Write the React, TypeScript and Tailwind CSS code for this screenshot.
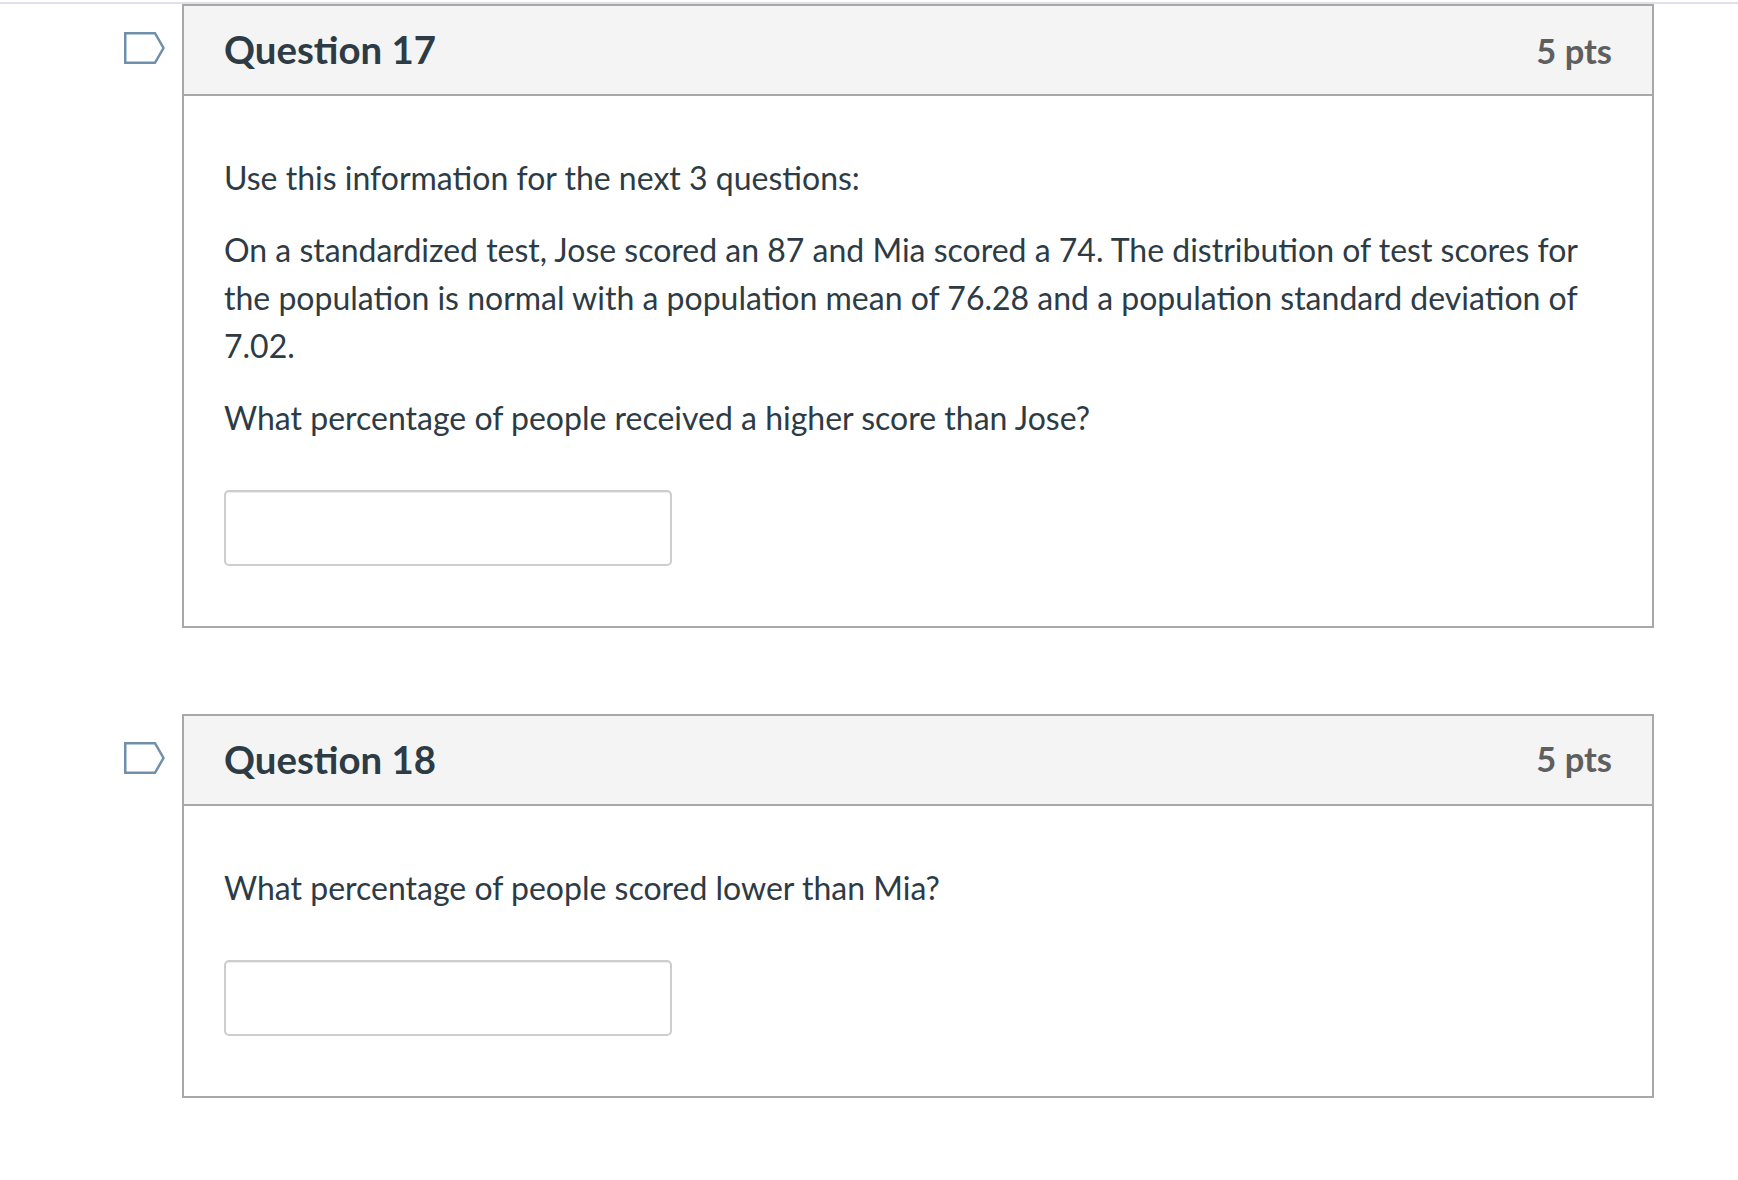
import React from 'react';

const Flag = () => (
  <svg width="41" height="32" viewBox="0 0 41 32" className="block">
    <path d="M1.25 1.25H31L39.5 16L31 30.75H1.25Z" fill="none" stroke="#6f8fab" strokeWidth="2.5" strokeLinejoin="miter" />
  </svg>
);

interface QuestionProps {
  title: string;
  ptsClass: string;
  children: React.ReactNode;
}

const Question: React.FC<QuestionProps> = ({ title, ptsClass, children }) => (
  <div className="flex items-start">
    <div className="w-[182px] shrink-0 pl-[124px] pt-[28px]">
      <Flag />
    </div>
    <div className="w-[1472px] border-2 border-[#a8a8a8] bg-white">
      <div className="flex h-[90px] items-center justify-between border-b-2 border-[#a8a8a8] bg-[#f4f4f4] px-[40px]">
        <h2 className="pb-[2px] text-[38.4px] font-bold text-[#2d3b45]">{title}</h2>
        <span className={ptsClass}>5 pts</span>
      </div>
      <div className="px-[40px] pt-[58px] pb-[60px]">
        {children}
        <div className="h-[76px] w-[448px] rounded-[5px] border-2 border-[#cdcdcd] bg-white shadow-[inset_0_1px_1px_rgba(0,0,0,0.08)]" />
      </div>
    </div>
  </div>
);

export default function App() {
  return (
    <div className="min-h-[1180px] bg-white pt-[2px] font-['Lato',sans-serif] text-[32px] leading-[48px] text-[#2d3b45]">
      <div className="h-[2px] bg-[#e0e0e8]" />
      <Question title="Question 17" ptsClass="pt-[2px] text-[34.5px] font-bold text-[#5f5f5f]">
        <p>Use this information for the next 3 questions:</p>
        <p className="mt-[24px]">
          On a standardized test, Jose scored an 87 and Mia scored a 74. The distribution of test scores for the population is normal with a population mean of 76.28 and a population standard deviation of 7.02.
        </p>
        <p className="mt-[24px] mb-[48px]">What percentage of people received a higher score than Jose?</p>
      </Question>
      <div className="h-[86px]" />
      <Question title="Question 18" ptsClass="pb-[2px] text-[34.5px] font-bold text-[#5f5f5f]">
        <p className="mb-[48px]">What percentage of people scored lower than Mia?</p>
      </Question>
    </div>
  );
}
